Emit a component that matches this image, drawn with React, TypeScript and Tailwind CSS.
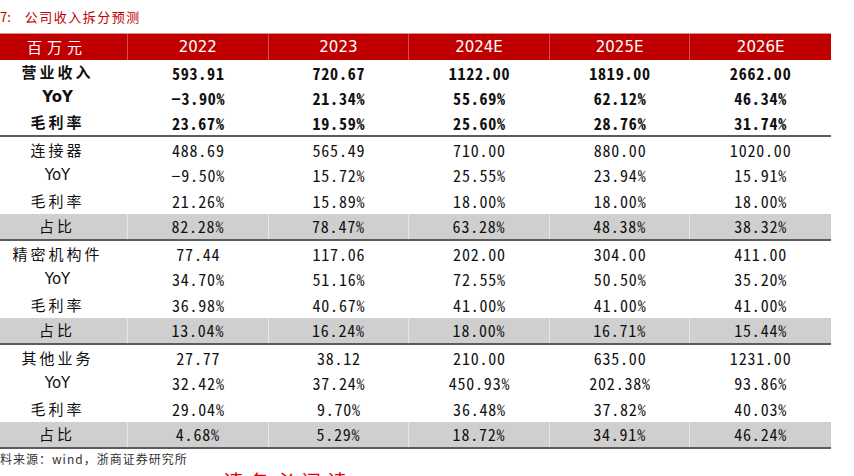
import React from 'react';

const years = ['2022', '2023', '2024E', '2025E', '2026E'];

type Row = { label: string; values: string[]; bold?: boolean; shade?: boolean };

const groups: Row[][] = [
  [
    { label: '营业收入', values: ['593.91', '720.67', '1122.00', '1819.00', '2662.00'], bold: true },
    { label: 'YoY', values: ['-3.90%', '21.34%', '55.69%', '62.12%', '46.34%'], bold: true },
    { label: '毛利率', values: ['23.67%', '19.59%', '25.60%', '28.76%', '31.74%'], bold: true },
  ],
  [
    { label: '连接器', values: ['488.69', '565.49', '710.00', '880.00', '1020.00'] },
    { label: 'YoY', values: ['-9.50%', '15.72%', '25.55%', '23.94%', '15.91%'] },
    { label: '毛利率', values: ['21.26%', '15.89%', '18.00%', '18.00%', '18.00%'] },
    { label: '占比', values: ['82.28%', '78.47%', '63.28%', '48.38%', '38.32%'], shade: true },
  ],
  [
    { label: '精密机构件', values: ['77.44', '117.06', '202.00', '304.00', '411.00'] },
    { label: 'YoY', values: ['34.70%', '51.16%', '72.55%', '50.50%', '35.20%'] },
    { label: '毛利率', values: ['36.98%', '40.67%', '41.00%', '41.00%', '41.00%'] },
    { label: '占比', values: ['13.04%', '16.24%', '18.00%', '16.71%', '15.44%'], shade: true },
  ],
  [
    { label: '其他业务', values: ['27.77', '38.12', '210.00', '635.00', '1231.00'] },
    { label: 'YoY', values: ['32.42%', '37.24%', '450.93%', '202.38%', '93.86%'] },
    { label: '毛利率', values: ['29.04%', '9.70%', '36.48%', '37.82%', '40.03%'] },
    { label: '占比', values: ['4.68%', '5.29%', '18.72%', '34.91%', '46.24%'], shade: true },
  ],
];

const numFont = "font-['Noto_Sans_Mono_CJK_SC','DejaVu_Sans_Mono',monospace]";
const cjkFont = "font-['Noto_Sans_CJK_SC',sans-serif]";

const fmt = (v: string) => v.replace('-', '−');

const DataRow = ({ row, first }: { row: Row; first: boolean }) => (
  <div className={`flex items-center ${first ? 'h-[25px]' : 'h-[25.5px]'} ${row.shade ? 'bg-[#d0cfd0]' : ''}`}>
    <div
      className={`w-[141px] h-full flex items-center justify-center ${row.label === 'YoY' ? "font-['DejaVu_Sans',sans-serif] text-[15px]" : `${cjkFont} text-[15px] tracking-[3px]`} ${row.bold ? 'font-bold' : ''} ${row.shade ? 'border-r border-[#e6e6e6]' : ''}`}
    >
      {row.label}
    </div>
    {row.values.map((v, i) => (
      <div
        key={i}
        className={`w-[140.6px] h-full flex items-center justify-center ${numFont} text-[16px] tracking-[0.8px] ${row.bold ? 'font-bold' : ''} ${row.shade && i < 4 ? 'border-r border-[#e6e6e6]' : ''}`}
      >
        {fmt(v)}
      </div>
    ))}
  </div>
);

export default function App() {
  return (
    <div className="w-[854px] h-[476px] overflow-hidden bg-white text-[#111]">
      {/* caption */}
      <div className={`h-[33px] pt-[9px] text-[13px] leading-[16px] text-[#c00000] ${cjkFont}`}>
        <span>7:</span>
        <span className="ml-[14px] tracking-[1.5px]">公司收入拆分预测</span>
      </div>

      <div className="ml-[-13px] w-[844px]">
        {/* header */}
        <div className="flex h-[27px] bg-[#c00000] border-t border-[#e08a8a] text-white">
          <div className={`w-[141px] flex items-center justify-center border-r border-[#d9494d] ${cjkFont} text-[15px] tracking-[5px]`}>
            百万元
          </div>
          {years.map((y, i) => (
            <div
              key={y}
              className={`w-[140.6px] flex items-center justify-center font-['DejaVu_Sans',sans-serif] text-[15px] ${i < 4 ? 'border-r border-[#d9494d]' : ''}`}
            >
              {y}
            </div>
          ))}
        </div>

        {groups.map((g, gi) => (
          <div key={gi} className="border-b-2 border-[#5c5c5c]">
            {g.map((r, ri) => (
              <DataRow key={ri} row={r} first={gi === 0} />
            ))}
          </div>
        ))}
      </div>

      {/* source */}
      <div className={`pt-[3px] text-[12px] leading-[14px] text-[#333] ${cjkFont} tracking-[1px]`}>
        料来源：wind，浙商证券研究所
      </div>
      <div className={`mt-[4px] ml-[223px] text-[20px] leading-[24px] text-[#e00000] ${cjkFont} tracking-[6px]`}>
        请务必阅读
      </div>
    </div>
  );
}
